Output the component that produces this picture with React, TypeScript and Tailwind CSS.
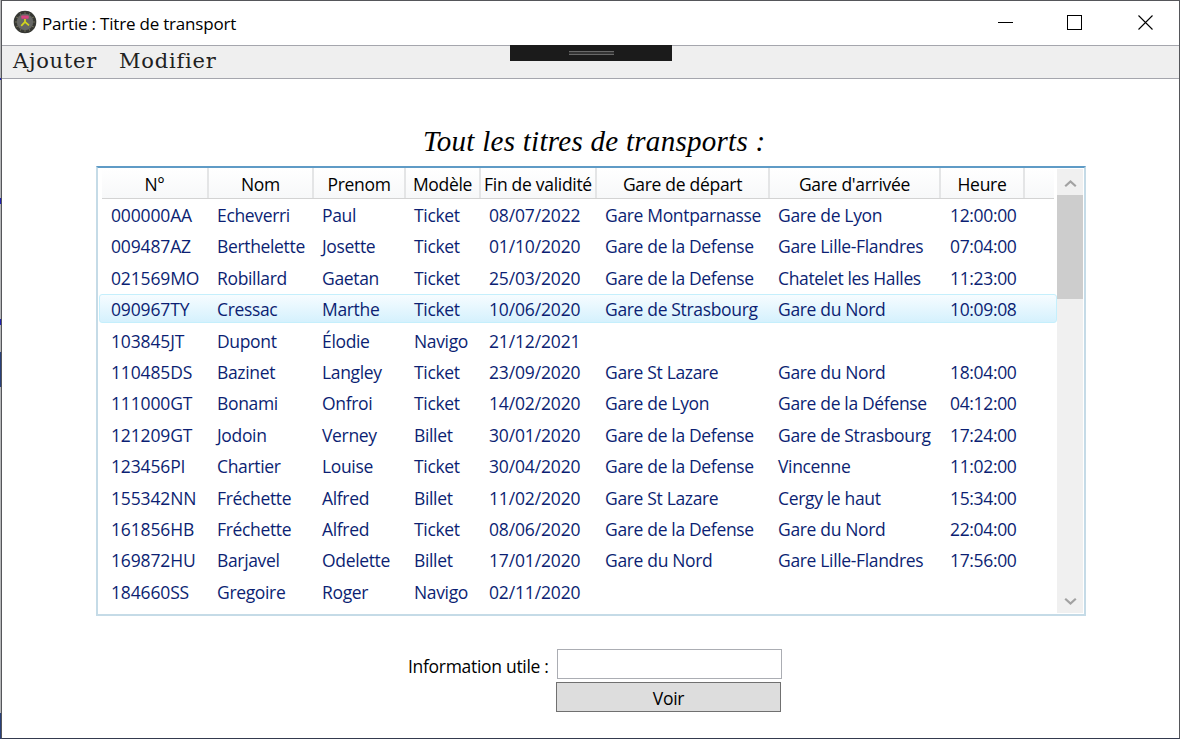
const columns = ["N°", "Nom", "Prenom", "Modèle", "Fin de validité", "Gare de départ", "Gare d'arrivée", "Heure"];

const rows: string[][] = [
  ["000000AA", "Echeverri", "Paul", "Ticket", "08/07/2022", "Gare Montparnasse", "Gare de Lyon", "12:00:00"],
  ["009487AZ", "Berthelette", "Josette", "Ticket", "01/10/2020", "Gare de la Defense", "Gare Lille-Flandres", "07:04:00"],
  ["021569MO", "Robillard", "Gaetan", "Ticket", "25/03/2020", "Gare de la Defense", "Chatelet les Halles", "11:23:00"],
  ["090967TY", "Cressac", "Marthe", "Ticket", "10/06/2020", "Gare de Strasbourg", "Gare du Nord", "10:09:08"],
  ["103845JT", "Dupont", "Élodie", "Navigo", "21/12/2021", "", "", ""],
  ["110485DS", "Bazinet", "Langley", "Ticket", "23/09/2020", "Gare St Lazare", "Gare du Nord", "18:04:00"],
  ["111000GT", "Bonami", "Onfroi", "Ticket", "14/02/2020", "Gare de Lyon", "Gare de la Défense", "04:12:00"],
  ["121209GT", "Jodoin", "Verney", "Billet", "30/01/2020", "Gare de la Defense", "Gare de Strasbourg", "17:24:00"],
  ["123456PI", "Chartier", "Louise", "Ticket", "30/04/2020", "Gare de la Defense", "Vincenne", "11:02:00"],
  ["155342NN", "Fréchette", "Alfred", "Billet", "11/02/2020", "Gare St Lazare", "Cergy le haut", "15:34:00"],
  ["161856HB", "Fréchette", "Alfred", "Ticket", "08/06/2020", "Gare de la Defense", "Gare du Nord", "22:04:00"],
  ["169872HU", "Barjavel", "Odelette", "Billet", "17/01/2020", "Gare du Nord", "Gare Lille-Flandres", "17:56:00"],
  ["184660SS", "Gregoire", "Roger", "Navigo", "02/11/2020", "", "", ""],
];

const selected = 3;

function AppIcon() {
  const ticks = Array.from({ length: 12 }, (_, i) => i * 30);
  return (
    <svg width="24" height="24" viewBox="0 0 24 24" className="mb-[3px] shrink-0">
      <circle cx="12" cy="12" r="11.3" fill="#41423e" />
      <circle cx="12" cy="12" r="9.8" fill="none" stroke="#363733" strokeWidth="2.2" />
      {ticks.map((a) => (
        <path key={a} d="M12 2v1.8" stroke="#77755a" strokeWidth="0.9" transform={`rotate(${a} 12 12)`} />
      ))}
      <circle cx="12" cy="12" r="8.2" fill="#666765" />
      <rect x="8.3" y="5.4" width="7.4" height="3.4" rx="0.8" fill="#d8437f" />
      <path d="M12 9v3.5M12 11.8l-3.8 4M12 11.8l4 3.6" stroke="#d3d51c" strokeWidth="1.7" fill="none" />
    </svg>
  );
}

function TitleBar() {
  return (
    <header className="flex h-[44px] shrink-0 items-center bg-white pl-[11px]">
      <AppIcon />
      <h1 className="ml-[5px] flex-1 whitespace-nowrap pt-px text-[17px] tracking-[-0.2px]">Partie : Titre de transport</h1>
      <div className="flex pr-[25px]">
        <svg width="16" height="16" className="mr-[53px]" shapeRendering="crispEdges">
          <path d="M0 7.5h15" stroke="#000" />
        </svg>
        <svg width="16" height="16" className="mr-[55px]" shapeRendering="crispEdges">
          <path d="M.5 .5h14v14h-14z" fill="none" stroke="#000" />
        </svg>
        <svg width="16" height="16">
          <path d="M.5 .5l14 14M14.5 .5l-14 14" stroke="#000" strokeWidth="1.1" />
        </svg>
      </div>
    </header>
  );
}

function MenuBar() {
  return (
    <nav className="relative flex h-[34px] shrink-0 items-center border-y border-[#a5a6ad] bg-[#efefef] pb-px pl-[11px] font-['DejaVu_Serif',serif] text-[21px] text-[#212121]">
      <span className="w-[106px] tracking-[0.75px]">Ajouter</span>
      <span className="tracking-[0.8px]">Modifier</span>
      <div className="absolute -top-px left-[508px] flex h-4 w-[162px] justify-center bg-[#1b1b1b] pt-1.5">
        <div className="h-1 w-[45px] border-y border-[#686868] bg-[#333]" />
      </div>
    </nav>
  );
}

function ScrollBar() {
  return (
    <div className="mt-px mb-px mr-px flex w-[26px] shrink-0 flex-col bg-[#f0f0f0]">
      <div className="flex h-[26px] items-center justify-center pt-[3px]">
        <svg width="13" height="9" viewBox="0 0 13 9">
          <path d="M1.2 7.3L6.5 2.4l5.3 4.9" fill="none" stroke="#a2a2a2" strokeWidth="2.2" />
        </svg>
      </div>
      <div className="h-[104px] bg-[#cdcdcd]" />
      <div className="flex-1" />
      <div className="flex h-[25px] items-center justify-center pt-px">
        <svg width="13" height="9" viewBox="0 0 13 9">
          <path d="M1.2 1.7l5.3 4.9 5.3-4.9" fill="none" stroke="#a2a2a2" strokeWidth="2.2" />
        </svg>
      </div>
    </div>
  );
}

const headGrid = "grid grid-cols-[107px_105px_92px_75px_116px_173px_171px_84px_1fr]";
const rowGrid = "grid grid-cols-[106px_105px_92px_75px_116px_173px_172px_84px_1fr]";

function TicketList() {
  return (
    <section className="ml-[94px] flex h-[450px] w-[990px] border-2 border-[#c5dbe7] border-t-[#5f9bc6] bg-white">
      <div className="flex min-w-0 flex-1 flex-col">
        <div className={`${headGrid} ml-1 mr-[3px] h-[31px] border-b border-[#d3d3d3] bg-linear-to-b from-white to-[#f7f8f9]`}>
          {columns.map((c) => (
            <div key={c} className="flex items-center justify-center whitespace-nowrap border-r-2 border-[#e4e5e6] pt-[3px] text-[17.5px] tracking-[-0.3px]">
              {c}
            </div>
          ))}
        </div>
        <div className="pl-px pt-px">
          {rows.map((r, i) => (
            <div
              key={r[0]}
              className={
                i === selected
                  ? `${rowGrid} mb-[2.4px] h-[29px] items-center rounded-[3px] border border-[#c5effc] bg-linear-to-b from-[#f6fcff] to-[#d5f1fd] pl-[2px]`
                  : `${rowGrid} mb-[2.4px] h-[29px] items-center border border-transparent pl-[2px]`
              }
            >
              {r.map((v, j) => (
                <span
                  key={j}
                  className={
                    j === 0 || j === 4
                      ? "whitespace-nowrap pl-[9px] pt-px text-[17.5px] tracking-[-0.15px] text-[#0c1f73]"
                      : "whitespace-nowrap pl-[9px] pt-px text-[17.5px] tracking-[-0.34px] text-[#0c1f73]"
                  }
                >
                  {v}
                </span>
              ))}
            </div>
          ))}
        </div>
      </div>
      <ScrollBar />
    </section>
  );
}

export default function App() {
  return (
    <div className="flex h-[739px] w-[1180px] overflow-hidden bg-[#b5b6b8] font-['Open_Sans','Noto_Sans',sans-serif] text-black">
      <div className="flex w-px shrink-0 flex-col pt-[78px]">
        <div className="h-[2px] bg-[#2020b0]" />
        <div className="mt-[118px] h-[6px] bg-[#2020b0]" />
        <div className="mt-[115px] h-[6px] bg-[#2020b0]" />
        <div className="mt-[27px] h-[35px] bg-[#29407a]" />
        <div className="flex-1" />
        <div className="h-[26px] bg-[#29407a]" />
      </div>
      <div className="flex flex-1 flex-col border border-[#55565a] border-b-[#343a4e] bg-white">
        <TitleBar />
        <MenuBar />
        <main className="flex flex-1 flex-col">
          <h2 className="ml-[421px] mt-[44px] h-[43px] whitespace-nowrap font-['Liberation_Serif',serif] text-[29px] italic leading-[36px] tracking-[0.28px]">
            Tout les titres de transports :
          </h2>
          <TicketList />
          <form className="ml-[405px] mt-[33px] flex items-start text-[17.5px]">
            <label htmlFor="info" className="mt-[4px] w-[149px] whitespace-nowrap pl-px tracking-[-0.3px]">Information utile :</label>
            <div className="flex flex-col gap-[3px]">
              <input id="info" className="ml-px h-[30px] w-[225px] border border-[#abadb3] bg-white px-1 outline-none" />
              <button type="button" className="h-[30px] w-[225px] border border-[#707070] bg-[#dddddd] pt-[4px] leading-none tracking-[-0.3px]">
                Voir
              </button>
            </div>
          </form>
        </main>
      </div>
    </div>
  );
}
